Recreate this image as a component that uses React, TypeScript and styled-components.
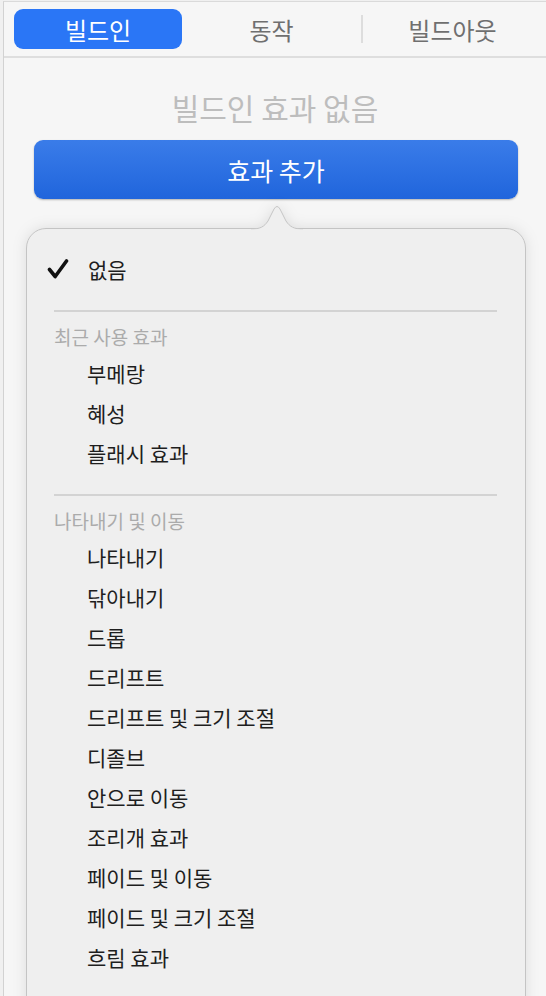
import React from 'react';
import styled, { createGlobalStyle } from 'styled-components';

const GlobalStyle = createGlobalStyle`
  html, body {
    margin: 0;
    padding: 0;
    background: #f0f0f0;
    overflow: hidden;
  }
  body {
    font-family: "Noto Sans CJK KR", "Noto Sans", sans-serif;
  }
`;

const Page = styled.div`
  width: 546px;
  height: 996px;
  padding: 1px 0 0 3px;
  box-sizing: border-box;
  overflow: hidden;
`;

const Panel = styled.div`
  height: 100%;
  background: #f6f6f6;
  border-left: 1px solid #d2d2d2;
  border-top: 1px solid #dadada;
`;

const TabBar = styled.div`
  display: flex;
  align-items: center;
  height: 40px;
  padding: 7px 0 7px 10px;
  border-bottom: 2px solid #dedede;
`;

const Tab = styled.div<{ $active?: boolean; $width: number }>`
  width: ${p => p.$width}px;
  height: 40px;
  display: flex;
  align-items: center;
  justify-content: center;
  border-radius: 9px;
  font-size: 24px;
  color: ${p => (p.$active ? '#ffffff' : '#6f6f6f')};
  background: ${p => (p.$active ? '#2a76f6' : 'transparent')};
`;

const TabDivider = styled.div`
  width: 2px;
  height: 28px;
  background: #dddddd;
`;

const Status = styled.div`
  margin-top: 31px;
  height: 36px;
  line-height: 36px;
  text-align: center;
  font-size: 30px;
  color: #bdbdbd;
`;

const AddButton = styled.div`
  margin: 15px 28px 0 30px;
  height: 59px;
  border-radius: 9px;
  background: linear-gradient(#3a7ce9, #2065dc);
  box-shadow: 0 1px 2px rgba(0, 0, 0, 0.28);
  color: #ffffff;
  font-size: 25px;
  display: flex;
  align-items: center;
  justify-content: center;
`;

const Popover = styled.div`
  position: relative;
  margin: 29px 0 0 22px;
  width: 500px;
  box-sizing: border-box;
  background: #efefef;
  border: 1px solid #c4c4c4;
  border-radius: 20px;
  padding: 20px 0 60px;
  filter: drop-shadow(0 0 7px rgba(0, 0, 0, 0.1));
`;

const Arrow = styled.svg`
  position: absolute;
  top: -25px;
  left: 224px;
  width: 52px;
  height: 27px;
  overflow: visible;
`;

const Row = styled.div`
  height: 40px;
  display: flex;
  align-items: center;
  padding-left: 60px;
  font-size: 21px;
  color: #1e1e1e;
`;

const CheckRow = styled(Row)`
  padding-left: 20px;
  gap: 19px;
`;

const Separator = styled.div`
  height: 2px;
  margin: 21px 28px 0 27px;
  background: #d3d3d3;
`;

const SectionTitle = styled.div`
  margin: 13px 0 4px 27px;
  height: 24px;
  line-height: 24px;
  font-size: 19px;
  color: #ababab;
`;

const CheckIcon = () => (
  <svg width="22" height="20" viewBox="0 0 22 20">
    <path
      d="M2.5 10.5 L8.2 17.5 L19.5 2"
      fill="none"
      stroke="#111"
      strokeWidth="3.6"
      strokeLinecap="round"
      strokeLinejoin="round"
    />
  </svg>
);

const sections = [
  { title: '최근 사용 효과', items: ['부메랑', '혜성', '플래시 효과'] },
  {
    title: '나타내기 및 이동',
    items: [
      '나타내기',
      '닦아내기',
      '드롭',
      '드리프트',
      '드리프트 및 크기 조절',
      '디졸브',
      '안으로 이동',
      '조리개 효과',
      '페이드 및 이동',
      '페이드 및 크기 조절',
      '흐림 효과',
    ],
  },
];

export default function App() {
  return (
    <Page>
      <GlobalStyle />
      <Panel>
        <TabBar>
          <Tab $active $width={168}>빌드인</Tab>
          <Tab $width={179}>동작</Tab>
          <TabDivider />
          <Tab $width={179}>빌드아웃</Tab>
        </TabBar>
        <Status>빌드인 효과 없음</Status>
        <AddButton>효과 추가</AddButton>
        <Popover>
          <Arrow viewBox="0 0 52 27">
            <path
              d="M0 25 C9 25 13 23 17 17 L23 5 Q26 0 29 5 L35 17 C39 23 43 25 52 25"
              fill="#efefef"
              stroke="#c4c4c4"
              strokeWidth="1"
            />
            <rect x="-1" y="25.5" width="54" height="3" fill="#efefef" />
          </Arrow>
          <CheckRow>
            <CheckIcon />
            없음
          </CheckRow>
          {sections.map(section => (
            <React.Fragment key={section.title}>
              <Separator />
              <SectionTitle>{section.title}</SectionTitle>
              {section.items.map(item => (
                <Row key={item}>{item}</Row>
              ))}
            </React.Fragment>
          ))}
        </Popover>
      </Panel>
    </Page>
  );
}
